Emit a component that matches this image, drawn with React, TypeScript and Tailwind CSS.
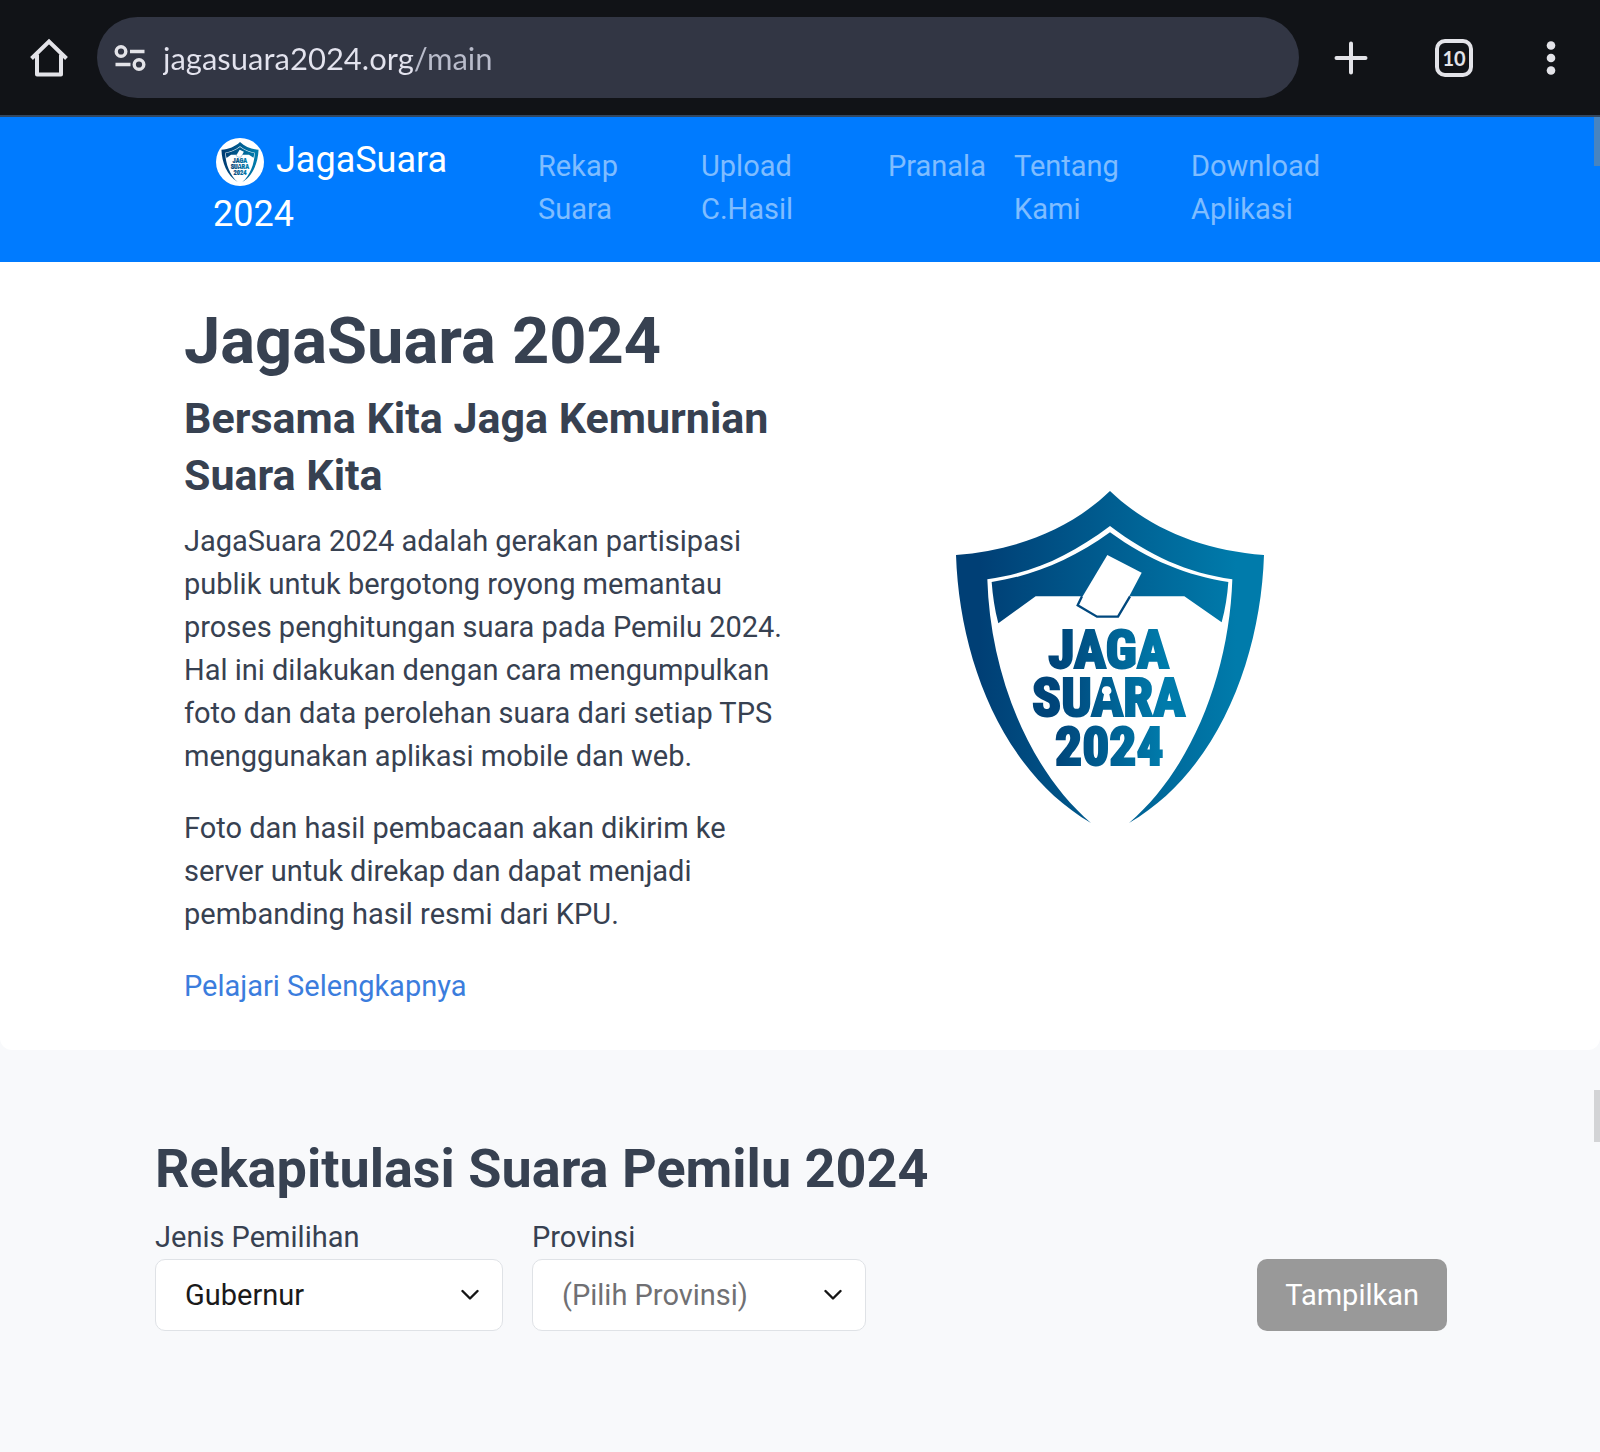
import { useId, useState } from "react";

function ShieldLogo({ className }: { className: string }) {
  const id = useId();
  const body = `${id}-body`;
  const word = `${id}-word`;
  return (
    <svg viewBox="78 60 924 996" className={className} role="img" aria-label="Logo Jaga Suara 2024">
      <defs>
        <linearGradient id={body} gradientUnits="userSpaceOnUse" x1="150" y1="0" x2="920" y2="0">
          <stop offset="0" stopColor="#003f75" />
          <stop offset="1" stopColor="#007bab" />
        </linearGradient>
        <linearGradient id={word} gradientUnits="userSpaceOnUse" x1="370" y1="0" x2="700" y2="0">
          <stop offset="0" stopColor="#004479" />
          <stop offset="1" stopColor="#007bab" />
        </linearGradient>
      </defs>
      <path
        d="M540 60C660 175 820 238 1002 252C992 560 865 900 597 1056C790 890 898 600 907 325C770 305 660 255 540 165C420 255 310 305 172 325C180 600 290 890 483 1056C215 900 88 560 78 252C260 238 420 175 540 60Z"
        fill={`url(#${body})`}
      />
      <path
        d="M540 184C655 268 775 315 895 333C892 374 886 414 875 454L763 376H317L205 457C194 415 188 374 185 333C305 315 425 268 540 184Z"
        fill={`url(#${body})`}
      />
      <path d="M532 252L635 305L565 438H501L442 403Z" fill="#fff" />
      <path d="M456 376L443 403L501 437H564L600 376" fill="none" stroke="#00487e" strokeWidth="7" />
      <g
        fill={`url(#${word})`}
        stroke={`url(#${word})`}
        strokeWidth="6"
        fontFamily='"Roboto Condensed", "Liberation Sans Narrow", Roboto, sans-serif'
        fontWeight="800"
        fontSize="160"
        textAnchor="middle"
      >
        <text x="536" y="592">JAGA</text>
        <text x="536" y="736">SUARA</text>
        <text x="538" y="883">2024</text>
      </g>
      <path d="M530 646a13 13 0 0 1 8 24l4 20h-24l4-20a13 13 0 0 1 8-24Z" fill="#fff" />
    </svg>
  );
}

const navLinks = [
  { label: "Rekap Suara", width: "w-[163px]" },
  { label: "Upload C.Hasil", width: "w-[187px]" },
  { label: "Pranala", width: "w-[126px]" },
  { label: "Tentang Kami", width: "w-[177px]" },
  { label: "Download Aplikasi", width: "w-[212px]" },
];

function BrowserBar() {
  return (
    <div className="flex h-[117px] items-center border-b-2 border-[#33475f] bg-[#111317] px-[29px] text-[#e3e3e8]">
      <button type="button" aria-label="Beranda" className="shrink-0">
        <svg viewBox="0 0 40 40" className="size-10" fill="none" stroke="currentColor" strokeWidth="4" strokeLinejoin="round">
          <path d="M2.500 20.500L20 3.500L37.500 20.500" strokeLinejoin="miter" />
          <path d="M8 16.500V36.500H32V16.500" />
        </svg>
      </button>
      <div className="ml-7 flex h-[81px] min-w-0 flex-1 items-center rounded-full bg-[#323644] pl-4">
        <button type="button" aria-label="Informasi situs" className="shrink-0">
          <svg viewBox="0 0 34 28" className="h-7 w-[34px]" fill="none" stroke="currentColor" strokeWidth="3.400">
            <circle cx="8" cy="7.500" r="4.800" />
            <path d="M17 7.500H31.500M2.500 20.500H17.500" />
            <circle cx="26" cy="20.500" r="4.800" />
          </svg>
        </button>
        <input
          aria-label="Alamat situs"
          readOnly
          value="jagasuara2024.org/main"
          className="ml-4 min-w-0 flex-1 bg-linear-to-r from-[#e3e3ee] from-[251px] to-[#b9bccb] to-[251px] bg-clip-text font-['Lato',sans-serif] text-[31px] leading-10 text-transparent outline-none"
        />
      </div>
      <button type="button" aria-label="Tab baru" className="ml-8 shrink-0">
        <svg viewBox="0 0 40 40" className="size-10" fill="none" stroke="currentColor" strokeWidth="4" strokeLinecap="round">
          <path d="M20 5.500V34.500M5.500 20H34.500" />
        </svg>
      </button>
      <button
        type="button"
        aria-label="10 tab terbuka"
        className="ml-16 flex size-[38px] shrink-0 items-center justify-center rounded-[10px] border-4 border-current font-['Lato',sans-serif] text-[20px] leading-none font-bold"
      >
        10
      </button>
      <button type="button" aria-label="Menu" className="ml-[58px] shrink-0">
        <svg viewBox="0 0 40 40" className="size-10" fill="currentColor">
          <circle cx="20" cy="7.500" r="4.300" />
          <circle cx="20" cy="20" r="4.300" />
          <circle cx="20" cy="32.500" r="4.300" />
        </svg>
      </button>
    </div>
  );
}

function Chevron() {
  return (
    <svg
      viewBox="0 0 18 12"
      className="pointer-events-none absolute top-1/2 right-6 h-3 w-[18px] -translate-y-1/2"
      fill="none"
      stroke="#151515"
      strokeWidth="2.400"
      strokeLinecap="round"
      strokeLinejoin="round"
    >
      <path d="M1.500 2L9 9.500L16.500 2" />
    </svg>
  );
}

const selectClass =
  "h-[72px] w-full appearance-none rounded-[10px] border border-[#dfe2e6] bg-white pr-14 pl-[29px] text-[29px] leading-[43px]";

export default function App() {
  const [kind, setKind] = useState("gubernur");
  const [province, setProvince] = useState("");
  return (
    <div className="relative min-h-screen bg-[#f8f9fb] font-['Roboto',sans-serif] text-[29px] leading-[43px] text-[#374151]">
      <BrowserBar />
      <nav className="bg-[#007bff] pr-[14px] pl-4">
        <div className="mx-auto flex min-h-[145px] max-w-[1176px] items-start pt-[14px]">
          <a href="#" className="block w-[311px] shrink-0 pt-[2px] pr-16 text-[36px] leading-[54px] text-white">
            <span className="mr-3 ml-[3px] inline-flex size-12 items-center justify-center rounded-full bg-white align-middle">
              <ShieldLogo className="h-10 w-[38px]" />
            </span>
            JagaSuara 2024
          </a>
          <ul className="flex pt-[14px]">
            {navLinks.map((link) => (
              <li key={link.label} className={link.width}>
                <a href="#" className="block px-[14px] text-white/50">
                  {link.label}
                </a>
              </li>
            ))}
          </ul>
        </div>
      </nav>

      <main>
        <section className="rounded-b-xl bg-white pt-[43px] pr-[14px] pb-[42px] pl-4">
          <div className="mx-auto grid max-w-[1234px] grid-cols-2 items-center">
            <div>
              <h1 className="text-[65px] leading-[72px] font-bold">JagaSuara 2024</h1>
              <h2 className="mt-[13px] text-[43px] leading-[57px] font-bold">Bersama Kita Jaga Kemurnian Suara Kita</h2>
              <p className="mt-4">
                JagaSuara 2024 adalah gerakan partisipasi publik untuk bergotong royong memantau proses penghitungan
                suara pada Pemilu 2024. Hal ini dilakukan dengan cara mengumpulkan foto dan data perolehan suara dari
                setiap TPS menggunakan aplikasi mobile dan web.
              </p>
              <p className="mt-[29px]">
                Foto dan hasil pembacaan akan dikirim ke server untuk direkap dan dapat menjadi pembanding hasil resmi
                dari KPU.
              </p>
              <p className="mt-[29px]">
                <a href="#" className="text-[#3b7ddd]">
                  Pelajari Selengkapnya
                </a>
              </p>
            </div>
            <div className="flex justify-center">
              <ShieldLogo className="h-[332px] w-[308px]" />
            </div>
          </div>
        </section>

        <section className="pt-[86px] pr-[14px] pb-[86px] pl-4">
          <div className="mx-auto max-w-[1292px]">
            <h2 className="text-[54px] leading-[65px] font-bold">Rekapitulasi Suara Pemilu 2024</h2>
            <form className="mt-[15px] flex items-end gap-[29px]">
              <div className="w-[348px]">
                <label htmlFor="jenis" className="block">
                  Jenis Pemilihan
                </label>
                <div className="relative">
                  <select
                    id="jenis"
                    value={kind}
                    onChange={(e) => setKind(e.target.value)}
                    className={`${selectClass} text-[#1a1a1a]`}
                  >
                    <option value="gubernur">Gubernur</option>
                  </select>
                  <Chevron />
                </div>
              </div>
              <div className="w-[334px]">
                <label htmlFor="provinsi" className="block">
                  Provinsi
                </label>
                <div className="relative">
                  <select
                    id="provinsi"
                    value={province}
                    onChange={(e) => setProvince(e.target.value)}
                    className={`${selectClass} text-[#707073]`}
                  >
                    <option value="">(Pilih Provinsi)</option>
                  </select>
                  <Chevron />
                </div>
              </div>
              <button type="button" className="ml-auto h-[72px] rounded-[10px] bg-[#999999] px-7 text-white">
                Tampilkan
              </button>
            </form>
          </div>
        </section>
      </main>
      <div className="absolute top-[117px] right-0 h-[49px] w-[6px] bg-[#4784c0]" />
      <div className="absolute top-[1090px] right-0 h-[52px] w-[6px] bg-[#d3d4d6]" />
    </div>
  );
}
